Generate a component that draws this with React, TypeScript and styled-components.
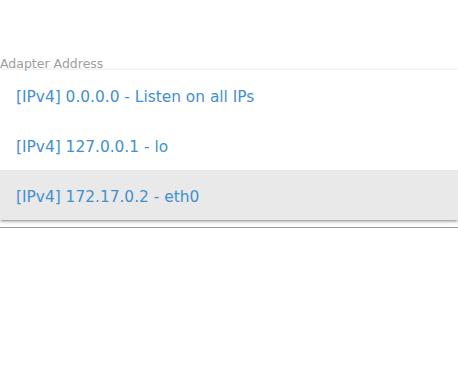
import React from "react";
import styled, { createGlobalStyle } from "styled-components";

const Global = createGlobalStyle`
  html, body { margin: 0; padding: 0; background: #fff; }
  body { font-family: "DejaVu Sans", "Open Sans", sans-serif; }
`;

const Field = styled.div`
  padding-top: 57px;
  width: 458px;
`;

const Label = styled.div`
  font-size: 12.5px;
  line-height: 13px;
  height: 13px;
  color: #9e9e9e;
  white-space: nowrap;
`;

const Menu = styled.ul`
  list-style: none;
  margin: 0;
  padding: 0;
  background: #fff;
  box-shadow: 0 2px 2px 0 rgba(0, 0, 0, 0.14), 0 3px 1px -2px rgba(0, 0, 0, 0.12),
    0 1px 5px 0 rgba(0, 0, 0, 0.2);
`;

const Item = styled.li<{ $active?: boolean }>`
  box-sizing: border-box;
  height: 50px;
  display: flex;
  align-items: center;
  padding: 3px 0 0 16px;
  font-size: 15.4px;
  color: #4290d0;
  background: ${(p) => (p.$active ? "#e9e9e9" : "#fff")};
  white-space: nowrap;
`;

const Underline = styled.div`
  margin-top: 7px;
  border-bottom: 1px solid #9e9e9e;
`;

const items = [
  "[IPv4] 0.0.0.0 - Listen on all IPs",
  "[IPv4] 127.0.0.1 - lo",
  "[IPv4] 172.17.0.2 - eth0",
];

export default function App() {
  return (
    <>
      <Global />
      <Field>
        <Label>Adapter Address</Label>
        <Menu>
          {items.map((t, i) => (
            <Item key={t} $active={i === 2}>
              {t}
            </Item>
          ))}
        </Menu>
        <Underline />
      </Field>
    </>
  );
}
